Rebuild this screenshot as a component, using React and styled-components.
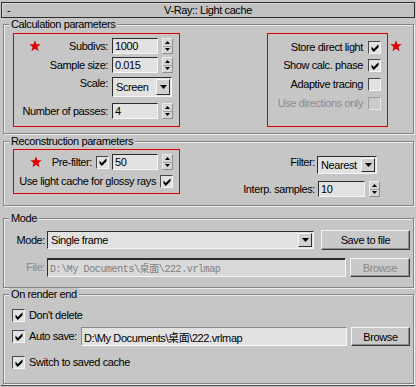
import React from "react";
import styled, { createGlobalStyle } from "styled-components";

const BG = "#c6c6c6";
const RED = "#dc0000";

const GlobalStyle = createGlobalStyle`
  html, body { margin: 0; padding: 0; background: ${BG}; }
  body { font-family: "Liberation Sans", Arial, sans-serif; font-size: 11px; color: #000; }
  *, *::before, *::after { box-sizing: border-box; }
`;

const Panel = styled.div`
  width: 416px;
  height: 387px;
  padding-top: 2px;
  background: ${BG};
  display: flex;
  flex-direction: column;
  letter-spacing: -0.4px;
  overflow: hidden;
`;

const TitleBar = styled.div`
  margin-left: 1px;
  width: 414px;
  height: 16px;
  flex: none;
  border: 1px solid #2e2e2e;
  background: #c1c1c1;
  box-shadow: inset 1px 1px 0 #d8d8d8;
  display: grid;
  grid-template-columns: 1fr auto 1fr;
  align-items: center;
  line-height: 14px;
`;

const Collapse = styled.span`
  padding-left: 5px;
`;

const Group = styled.fieldset`
  margin: ${(p) => p.$mt || 0}px 0 0 3px;
  padding: 0;
  width: 411px;
  min-width: 0;
  flex: none;
  border: 1px solid #858585;
  box-shadow: inset 1px 1px 0 #ececec, 1px 1px 0 #ececec;
`;

const Legend = styled.legend`
  margin-left: 5px;
  padding: 0 2px;
  height: 13px;
  line-height: 13px;
  background: ${BG};
`;

const CalcBody = styled.div`
  display: flex;
  align-items: flex-start;
  padding: 2px 11px 6px 9px;
`;

const ReconBody = styled.div`
  display: flex;
  align-items: flex-start;
  padding: 1px 32px 8px 9px;
`;

const StackBody = styled.div`
  display: flex;
  flex-direction: column;
  padding: ${(p) => p.$pad};
`;

const RedBox = styled.div`
  flex: none;
  width: ${(p) => p.$w}px;
  height: ${(p) => p.$h}px;
  border: 1px solid ${RED};
  display: flex;
  flex-direction: column;
  align-items: ${(p) => (p.$right ? "flex-end" : "stretch")};
  padding: ${(p) => p.$pad};
  margin-left: ${(p) => (p.$push ? "auto" : "0")};
`;

const Row = styled.div`
  display: flex;
  align-items: ${(p) => (p.$start ? "flex-start" : "center")};
  height: ${(p) => p.$h}px;
  margin-top: ${(p) => p.$mt || 0}px;
  flex: none;
`;

const Label = styled.span`
  flex: none;
  margin-left: ${(p) => (p.$auto ? "auto" : `${p.$ml || 0}px`)};
  margin-right: ${(p) => p.$mr || 0}px;
  white-space: nowrap;
  line-height: 13px;
  color: ${(p) => (p.$disabled ? "#8a8a8a" : "#000")};
`;

const SideLabel = styled.span`
  flex: none;
  width: 41px;
  text-align: right;
  white-space: nowrap;
  line-height: 13px;
  color: ${(p) => (p.$disabled ? "#8a8a8a" : "#000")};
`;

const StarSvg = styled.svg`
  flex: none;
  display: block;
  margin-left: ${(p) => p.$ml || 0}px;
  margin-top: ${(p) => p.$mt || 0}px;
`;

function Star({ ml, mt }) {
  return (
    <StarSvg $ml={ml} $mt={mt} width="12" height="12" viewBox="0 0 24 24">
      <polygon
        points="12,0.5 15,8.4 23.5,8.7 16.8,14 19.2,22.5 12,17.6 4.8,22.5 7.2,14 0.5,8.7 9,8.4"
        fill={RED}
      />
    </StarSvg>
  );
}

const Field = styled.div`
  flex: ${(p) => (p.$grow ? 1 : "none")};
  width: ${(p) => (p.$w ? `${p.$w}px` : "auto")};
  height: ${(p) => p.$h}px;
  margin-left: ${(p) => p.$ml || 0}px;
  border: 1px solid;
  border-color: ${(p) =>
    p.$soft ? "#8a8a8a #f8f8f8 #f8f8f8 #8a8a8a" : "#2c2c2c #f4f4f4 #f4f4f4 #2c2c2c"};
  box-shadow: ${(p) => (p.$deep ? "inset 0 1px 0 #2c2c2c" : "none")};
  background: ${(p) => (p.$disabled ? "#d9d9d9" : "#e2e2e2")};
  padding-left: 2px;
  display: flex;
  align-items: center;
  overflow: hidden;
  white-space: nowrap;
  font-family: ${(p) =>
    p.$mono
      ? '"Liberation Mono", "Noto Sans CJK SC", monospace'
      : '"Liberation Sans", "Noto Sans CJK SC", sans-serif'};
  font-size: ${(p) => (p.$mono ? 10 : 11)}px;
  color: ${(p) => (p.$disabled ? "#7e7e7e" : "#000")};
`;

const SpinBox = styled.div`
  flex: none;
  width: 11px;
  height: 16px;
  margin-left: 4px;
  display: flex;
  flex-direction: column;
  background: #d5d5d5;
  border: 1px solid;
  border-color: #ececec #8c8c8c #8c8c8c #ececec;
`;

const SpinHalf = styled.div`
  flex: 1;
  display: flex;
  align-items: center;
  justify-content: center;
  & + & {
    border-top: 1px solid #a0a0a0;
  }
`;

function Tri({ down, w = 5, h = 3 }) {
  return (
    <svg width={w} height={h} viewBox={`0 0 ${w} ${h}`} style={{ display: "block" }}>
      <polygon
        points={down ? `0,0 ${w},0 ${w / 2},${h}` : `0,${h} ${w},${h} ${w / 2},0`}
        fill="#000"
      />
    </svg>
  );
}

function Spinner() {
  return (
    <SpinBox>
      <SpinHalf>
        <Tri />
      </SpinHalf>
      <SpinHalf>
        <Tri down />
      </SpinHalf>
    </SpinBox>
  );
}

const SelectBox = styled.div`
  flex: ${(p) => (p.$grow ? 1 : "none")};
  width: ${(p) => (p.$w ? `${p.$w}px` : "auto")};
  height: ${(p) => p.$h}px;
  margin-left: ${(p) => p.$ml || 0}px;
  margin-right: ${(p) => p.$mr || 0}px;
  border: 1px solid;
  border-color: #2c2c2c #f4f4f4 #f4f4f4 #2c2c2c;
  background: #e2e2e2;
  display: flex;
  align-items: center;
  padding: 0 1px 0 3px;
`;

const SelectText = styled.span`
  flex: 1;
  white-space: nowrap;
`;

const SelectBtn = styled.div`
  flex: none;
  width: 14px;
  height: ${(p) => p.$h}px;
  background: #d0d0d0;
  border: 1px solid;
  border-color: #f6f6f6 #2c2c2c #2c2c2c #f6f6f6;
  display: flex;
  align-items: center;
  justify-content: center;
`;

function Select({ text, w, h, btnH, grow, ml, mr }) {
  return (
    <SelectBox $w={w} $h={h} $grow={grow} $ml={ml} $mr={mr}>
      <SelectText>{text}</SelectText>
      <SelectBtn $h={btnH}>
        <Tri down w={7} h={4} />
      </SelectBtn>
    </SelectBox>
  );
}

const Button = styled.div`
  flex: none;
  width: ${(p) => p.$w}px;
  height: 100%;
  margin-left: ${(p) => p.$ml || 0}px;
  border: 1px solid;
  border-color: #f4f4f4 #3a3a3a #3a3a3a #f4f4f4;
  box-shadow: inset -1px -1px 0 #8e8e8e;
  background: #c9c9c9;
  display: flex;
  align-items: center;
  justify-content: center;
  white-space: nowrap;
  color: ${(p) => (p.$disabled ? "#8a8a8a" : "#000")};
`;

const CheckBox = styled.div`
  flex: none;
  width: 13px;
  height: 13px;
  margin-left: ${(p) => p.$ml || 0}px;
  border: 1px solid;
  border-color: ${(p) =>
    p.$disabled ? "#9c9c9c #e6e6e6 #e6e6e6 #9c9c9c" : "#4a4a4a #f4f4f4 #f4f4f4 #4a4a4a"};
  background: ${(p) => (p.$disabled ? "#cbcbcb" : "#e2e2e2")};
  display: flex;
  align-items: center;
  justify-content: center;
`;

function Check({ checked, disabled, ml }) {
  return (
    <CheckBox $disabled={disabled} $ml={ml}>
      {checked && (
        <svg width="8" height="8" viewBox="0 0 8 8" style={{ display: "block" }}>
          <path d="M0.5 2.6 L2.8 4.9 L7.5 0.2 L7.5 3.2 L2.8 7.9 L0.5 5.6 Z" fill="#000" />
        </svg>
      )}
    </CheckBox>
  );
}

const SideGrid = styled.div`
  margin-left: auto;
  margin-top: 7px;
  display: grid;
  grid-template-columns: auto 64px;
  grid-template-rows: 18px 16px;
  row-gap: 7px;
  column-gap: 2px;
  align-items: center;
`;

const GridLabel = styled.span`
  justify-self: end;
  align-self: ${(p) => (p.$start ? "start" : "center")};
  white-space: nowrap;
  line-height: 13px;
`;

const GridCell = styled.div`
  display: flex;
  align-items: center;
  height: 100%;
  padding-left: ${(p) => p.$pl || 0}px;
`;

const BottomLine = styled.div`
  flex: none;
  margin: 1px 0 0 1px;
  width: 414px;
  height: 1px;
  background: #4a4a4a;
`;

export default function App() {
  return (
    <>
      <GlobalStyle />
      <Panel>
        <TitleBar>
          <Collapse>-</Collapse>
          <span>V-Ray:: Light cache</span>
          <span />
        </TitleBar>

        <Group>
          <Legend>Calculation parameters</Legend>
          <CalcBody>
            <RedBox $w={167} $h={94} $pad="4px 6px 0 0">
              <Row $h={16}>
                <Star ml={15} />
                <Label $auto $mr={4}>Subdivs:</Label>
                <Field $w={46} $h={16}>1000</Field>
                <Spinner />
              </Row>
              <Row $h={16} $mt={3}>
                <Label $auto $mr={4}>Sample size:</Label>
                <Field $w={46} $h={16}>0.015</Field>
                <Spinner />
              </Row>
              <Row $h={20} $mt={4} $start>
                <Label $auto $mr={4}>Scale:</Label>
                <Select text="Screen" w={60} h={20} btnH={16} mr={1} />
              </Row>
              <Row $h={16} $mt={6}>
                <Label $auto $mr={4}>Number of passes:</Label>
                <Field $w={46} $h={16}>4</Field>
                <Spinner />
              </Row>
            </RedBox>
            <RedBox $w={121} $h={94} $pad="7px 6px 0 0" $right $push>
              <Row $h={13}>
                <Label $mr={5}>Store direct light</Label>
                <Check checked />
              </Row>
              <Row $h={13} $mt={5}>
                <Label $mr={5}>Show calc. phase</Label>
                <Check checked />
              </Row>
              <Row $h={13} $mt={6}>
                <Label $mr={5}>Adaptive tracing</Label>
                <Check />
              </Row>
              <Row $h={13} $mt={6}>
                <Label $mr={5} $disabled>Use directions only</Label>
                <Check disabled />
              </Row>
            </RedBox>
            <Star ml={2} mt={7} />
          </CalcBody>
        </Group>

        <Group $mt={1}>
          <Legend>Reconstruction parameters</Legend>
          <ReconBody>
            <RedBox $w={167} $h={45} $pad="4px 6px 0 0">
              <Row $h={16}>
                <Star ml={16} />
                <Label $auto $mr={4}>Pre-filter:</Label>
                <Check checked />
                <Field $w={46} $h={16} $ml={3}>50</Field>
                <Spinner />
              </Row>
              <Row $h={13} $mt={5}>
                <Label $auto $mr={4}>Use light cache for glossy rays</Label>
                <Check checked />
              </Row>
            </RedBox>
            <SideGrid>
              <GridLabel $start>Filter:</GridLabel>
              <GridCell>
                <Select text="Nearest" w={60} h={18} btnH={14} />
              </GridCell>
              <GridLabel>Interp. samples:</GridLabel>
              <GridCell $pl={1}>
                <Field $w={47} $h={16}>10</Field>
                <Spinner />
              </GridCell>
            </SideGrid>
          </ReconBody>
        </Group>

        <Group $mt={6}>
          <Legend>Mode</Legend>
          <StackBody $pad="5px 3px 10px 0">
            <Row $h={20}>
              <SideLabel>Mode:</SideLabel>
              <Select text="Single frame" grow h={18} btnH={14} ml={2} />
              <Button $w={89} $ml={7}>Save to file</Button>
            </Row>
            <Row $h={19} $mt={8}>
              <SideLabel $disabled>File:</SideLabel>
              <Field $grow $h={19} $ml={2} $mono $disabled $deep>
                D:\My Documents\桌面\222.vrlmap
              </Field>
              <Button $w={60} $ml={4} $disabled>Browse</Button>
            </Row>
          </StackBody>
        </Group>

        <Group>
          <Legend>On render end</Legend>
          <StackBody $pad="8px 3px 14px 8px">
            <Row $h={13}>
              <Check checked />
              <Label $ml={4}>Don't delete</Label>
            </Row>
            <Row $h={19} $mt={5}>
              <Check checked />
              <Label $ml={4}>Auto save:</Label>
              <Field $grow $h={19} $ml={4} $soft>
                D:\My Documents\桌面\222.vrlmap
              </Field>
              <Button $w={59} $ml={4}>Browse</Button>
            </Row>
            <Row $h={13} $mt={10}>
              <Check checked />
              <Label $ml={4}>Switch to saved cache</Label>
            </Row>
          </StackBody>
        </Group>
        <BottomLine />
      </Panel>
    </>
  );
}
